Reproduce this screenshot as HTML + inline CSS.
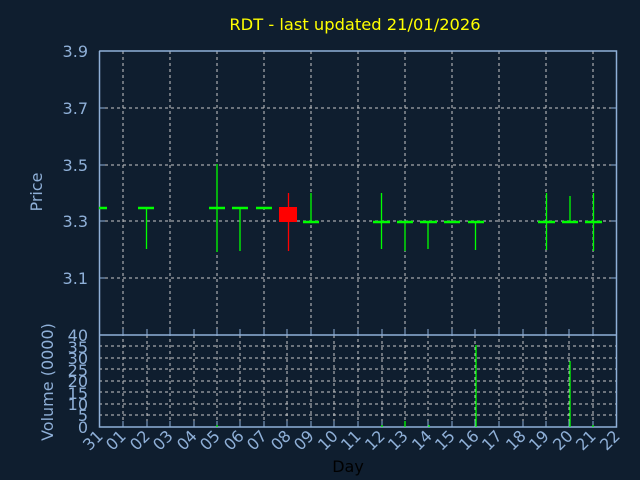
<!DOCTYPE html><html><head><style>body{margin:0;background:#0f1e2f;}svg{display:block}</style></head><body>
<svg width="640" height="480" xmlns="http://www.w3.org/2000/svg" font-family="DejaVu Sans, Liberation Sans, sans-serif">
<rect width="640" height="480" fill="#0f1e2f"/>
<text x="355" y="30" fill="#ffff00" font-size="16.3" text-anchor="middle">RDT - last updated 21/01/2026</text>
<g stroke="#c8c8c8" stroke-dasharray="3,3" stroke-width="1">
<path d="M99 108H617M99 165H617M99 221H617M99 278H617"/>
<path d="M123 51V427M170 51V427M217 51V427M264 51V427M311 51V427M358 51V427M405 51V427M452 51V427M499 51V427M546 51V427M593 51V427"/>
<path d="M99 346H617M99 358H617M99 369H617M99 381H617M99 392H617M99 404H617M99 415H617"/>
<path d="M147 335V427M194 335V427M240 335V427M287 335V427M334 335V427M382 335V427M428 335V427M475 335V427M523 335V427M569 335V427"/>
</g>
<g stroke="#8fb0d8" fill="none" stroke-width="1.5">
<path d="M99.5 51V427H616.5V51H99.5M99.5 335H616.5"/>
</g>
<g stroke="#8fb0d8" stroke-width="1">
<path d="M99 51h6M99 108h6M99 165h6M99 221h6M99 278h6M611 51h6M611 108h6M611 165h6M611 221h6M611 278h6"/>
<path d="M123 427v-6M147 427v-6M170 427v-6M194 427v-6M217 427v-6M240 427v-6M264 427v-6M287 427v-6M311 427v-6M334 427v-6M358 427v-6M382 427v-6M405 427v-6M428 427v-6M452 427v-6M475 427v-6M499 427v-6M523 427v-6M546 427v-6M569 427v-6M593 427v-6"/>
<path d="M123 335v-6M147 335v-6M170 335v-6M194 335v-6M217 335v-6M240 335v-6M264 335v-6M287 335v-6M311 335v-6M334 335v-6M358 335v-6M382 335v-6M405 335v-6M428 335v-6M452 335v-6M475 335v-6M499 335v-6M523 335v-6M546 335v-6M569 335v-6M593 335v-6"/>
</g>
<g fill="#8fb0d8" font-size="16" text-anchor="end">
<text x="88" y="57">3.9</text><text x="88" y="114">3.7</text><text x="88" y="171">3.5</text><text x="88" y="227">3.3</text><text x="88" y="284">3.1</text>
<text x="88" y="341">40</text><text x="88" y="353">35</text><text x="88" y="364">30</text><text x="88" y="376">25</text><text x="88" y="387">20</text><text x="88" y="399">15</text><text x="88" y="410">10</text><text x="88" y="421">5</text><text x="88" y="433">0</text>
</g>
<text transform="translate(42,192) rotate(-90)" fill="#8fb0d8" font-size="16" text-anchor="middle">Price</text>
<text transform="translate(53,382) rotate(-90)" fill="#8fb0d8" font-size="16" text-anchor="middle">Volume (0000)</text>
<g fill="#8fb0d8" font-size="16" text-anchor="end">
<text transform="translate(104,437) rotate(-45)">31</text>
<text transform="translate(127,437) rotate(-45)">01</text>
<text transform="translate(151,437) rotate(-45)">02</text>
<text transform="translate(174,437) rotate(-45)">03</text>
<text transform="translate(198,437) rotate(-45)">04</text>
<text transform="translate(221,437) rotate(-45)">05</text>
<text transform="translate(245,437) rotate(-45)">06</text>
<text transform="translate(268,437) rotate(-45)">07</text>
<text transform="translate(292,437) rotate(-45)">08</text>
<text transform="translate(315,437) rotate(-45)">09</text>
<text transform="translate(339,437) rotate(-45)">10</text>
<text transform="translate(362,437) rotate(-45)">11</text>
<text transform="translate(386,437) rotate(-45)">12</text>
<text transform="translate(409,437) rotate(-45)">13</text>
<text transform="translate(433,437) rotate(-45)">14</text>
<text transform="translate(456,437) rotate(-45)">15</text>
<text transform="translate(480,437) rotate(-45)">16</text>
<text transform="translate(503,437) rotate(-45)">17</text>
<text transform="translate(527,437) rotate(-45)">18</text>
<text transform="translate(550,437) rotate(-45)">19</text>
<text transform="translate(574,437) rotate(-45)">20</text>
<text transform="translate(597,437) rotate(-45)">21</text>
<text transform="translate(621,437) rotate(-45)">22</text>
</g>
<text x="348" y="472" fill="#000" font-size="16" text-anchor="middle">Day</text>
<g stroke="#00ff00" stroke-width="1.3">
<path d="M146.5 207V249M217 164V252M240 207V251M311 193V222M381.5 193V249M405 222V251M428 222V249M475.5 222V250M546.5 193V250M570 196V222M593.5 193V251"/>
</g>
<g stroke="#00ff00" stroke-width="2.5">
<path d="M99 208h8M138 208h16M209 208h16M232 208h16M256 208h16M303 222h16M373 222h17M397 222h16M420 222h17M444 222h16M468 222h16M538 222h17M562 222h16M585 222h17"/>
</g>
<path d="M288.5 193V251" stroke="#ff0000" stroke-width="1.3"/>
<rect x="279" y="207" width="18" height="15" fill="#ff0000"/>
<g stroke="#00ff00" stroke-width="1.3">
<path d="M476 345V427M570 361V427M382 425V427M405 421V427M429 425V427M593 425V427M217 425V427"/>
</g>
</svg>
</body></html>
